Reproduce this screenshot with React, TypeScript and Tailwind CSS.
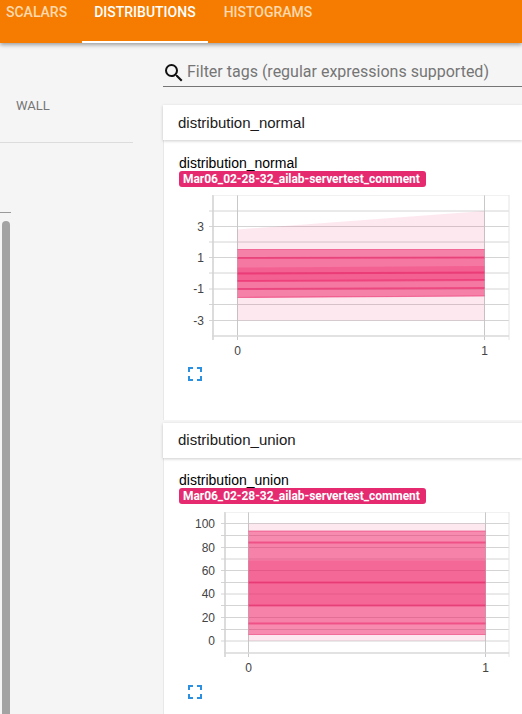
const tabs = [
  { label: "SCALARS", active: false },
  { label: "DISTRIBUTIONS", active: true },
  { label: "HISTOGRAMS", active: false },
];

type Band = { top: [number, number]; bottom: [number, number]; o: number };

type ChartProps = {
  height: number;
  originY: number;
  left: number;
  top: number;
  bottom: number;
  x0: number;
  x1: number;
  tickGap: number;
  grid: number[];
  ticks: { y: number; label: string }[];
  bands: Band[];
  lines: [number, number][];
};

function Chart({ height, originY, left, top, bottom, x0, x1, tickGap, grid, ticks, bands, lines }: ChartProps) {
  const ox = 163;
  const X = (x: number) => x - ox;
  const Y = (y: number) => y - originY;
  const right = 509;
  return (
    <svg width={359} height={height} className="block" style={{ fontFamily: '"Liberation Sans", sans-serif' }}>
      {grid.map((y) => (
        <line key={y} x1={X(left - 4)} x2={X(right)} y1={Y(y)} y2={Y(y)} stroke="#d4d4d4" strokeWidth={1} />
      ))}
      {[x0, x1].map((x) => (
        <line key={x} x1={X(x)} x2={X(x)} y1={Y(top)} y2={Y(bottom + 4)} stroke="#c8c8c8" strokeWidth={1} />
      ))}
      <line x1={X(left)} x2={X(left)} y1={Y(top)} y2={Y(bottom + 4)} stroke="#d0d0d0" strokeWidth={1.5} />
      <line x1={X(right)} x2={X(right)} y1={Y(top)} y2={Y(bottom + 4)} stroke="#e4e4e4" strokeWidth={1} />
      <line x1={X(left)} x2={X(right)} y1={Y(top)} y2={Y(top)} stroke="#e4e4e4" strokeWidth={1} />
      <line x1={X(left - 1)} x2={X(right)} y1={Y(bottom)} y2={Y(bottom)} stroke="#d8d8d8" strokeWidth={1.5} />
      {bands.map((b, i) => (
        <polygon
          key={i}
          points={`${X(x0)},${Y(b.top[0])} ${X(x1)},${Y(b.top[1])} ${X(x1)},${Y(b.bottom[1])} ${X(x0)},${Y(b.bottom[0])}`}
          fill="#f01a62"
          fillOpacity={b.o}
        />
      ))}
      {lines.map(([a, b], i) => (
        <line
          key={i}
          x1={X(x0)}
          x2={X(x1)}
          y1={Y(a)}
          y2={Y(b)}
          stroke="#e91e63"
          strokeOpacity={0.5}
          strokeWidth={i === 0 || i === lines.length - 1 ? 1.2 : 2}
        />
      ))}
      {ticks.map((t) => (
        <text key={t.label} x={X(left - tickGap)} y={Y(t.y) + 4} textAnchor="end" fontSize={12} fill="#444">
          {t.label}
        </text>
      ))}
      <text x={X(x0)} y={Y(bottom + 19)} textAnchor="middle" fontSize={12} fill="#444">0</text>
      <text x={X(x1)} y={Y(bottom + 19)} textAnchor="middle" fontSize={12} fill="#444">1</text>
    </svg>
  );
}

function FullscreenIcon() {
  return (
    <svg width={14} height={14} viewBox="0 0 14 14" fill="none" stroke="#2b90e0" strokeWidth={2}>
      <path d="M1 5V1h4M9 1h4v4M13 9v4H9M5 13H1V9" />
    </svg>
  );
}

function Section({
  title,
  chart,
  headerClass,
  bodyClass,
}: {
  title: string;
  chart: React.ReactNode;
  headerClass: string;
  bodyClass: string;
}) {
  return (
    <section className="w-[359px] shrink-0">
      <div className={`relative z-10 flex h-[35px] items-center bg-white pl-[15px] text-[15px] text-[#1a1a1a] shadow-[0_1px_3px_rgba(0,0,0,0.2)] ${headerClass}`}>
        {title}
      </div>
      <div className={`border-l border-[#e8e8e8] bg-white pl-[15px] ${bodyClass}`}>
        <div className="text-[14px] leading-[15px] text-black">{title}</div>
        <div
          className="flex h-[16px] w-[247px] items-center rounded-[3px] bg-[#e62a70] pl-[4px] text-[12px] font-bold tracking-[-0.05px] text-white"
          style={{ fontFamily: "Roboto, sans-serif" }}
        >
          Mar06_02-28-32_ailab-servertest_comment
        </div>
        <div className="-ml-[16px] mt-[8px]">{chart}</div>
        <div className="ml-[9px]">
          <FullscreenIcon />
        </div>
      </div>
    </section>
  );
}

export default function App() {
  return (
    <div className="flex h-[714px] w-[522px] flex-col overflow-hidden bg-[#f5f5f5]" style={{ fontFamily: '"Liberation Sans", sans-serif' }}>
      <header
        className="relative z-20 flex h-[43px] shrink-0 bg-[#f57c00] pl-[6px] shadow-[0_2px_4px_rgba(0,0,0,0.35)]"
        style={{ fontFamily: "Roboto, sans-serif" }}
      >
        {tabs.map((t) => (
          <div
            key={t.label}
            className={`h-[43px] pt-[3px] text-[14px] font-medium leading-[18px] ${
              t.active
                ? "ml-[15px] mr-[14px] border-b-2 border-white px-[12px] text-white"
                : "text-[#ffd9ad] last:ml-[2px]"
            }`}
          >
            {t.label}
          </div>
        ))}
      </header>
      <div className="flex min-h-0 flex-1">
        <aside className="w-[163px] shrink-0" style={{ fontFamily: "Roboto, sans-serif" }}>
          <div className="mt-[55px] w-[133px] border-b border-[#dcdcdc] pb-[29px] pl-[16px] text-[13px] leading-[15px] text-[#757575]">
            WALL
          </div>
          <div className="mt-[69px] h-px w-[11px] bg-[#9a9a9a]" />
          <div className="ml-[2px] mt-[8px] h-[500px] w-[8px] rounded-t-[4px] bg-[#a3a3a3]" />
        </aside>
        <main className="flex min-w-0 flex-1 flex-col">
          <div className="mt-[19px] flex h-[25px] w-[359px] shrink-0 items-start border-b border-[#757575]" style={{ fontFamily: "Roboto, sans-serif" }}>
            <svg width={24} height={24} viewBox="0 0 24 24" fill="#111" className="-mt-px shrink-0 -ml-px">
              <path d="M15.5 14h-.79l-.28-.27A6.47 6.47 0 0 0 16 9.5 6.5 6.5 0 1 0 9.5 16c1.61 0 3.09-.59 4.23-1.57l.27.28v.79l5 4.99L20.49 19l-4.99-5zm-6 0C7.01 14 5 11.99 5 9.5S7.01 5 9.5 5 14 7.01 14 9.5 11.99 14 9.5 14z" />
            </svg>
            <span className="ml-px whitespace-nowrap text-[16px] leading-[20px] text-[#757575]">Filter tags (regular expressions supported)</span>
          </div>
          <div className="mt-[18px] flex flex-col gap-[3px]">
            <Section
              title="distribution_normal"
              headerClass="pt-[2px]"
              bodyClass="h-[280px] pt-[16px]"
              chart={
                <Chart
                  height={172}
                  originY={195}
                  left={213}
                  top={195}
                  bottom={336}
                  x0={237.5}
                  x1={484.5}
                  tickGap={9}
                  grid={[211, 226.5, 242, 257.5, 273, 289, 304.5, 320.5]}
                  ticks={[
                    { y: 226.5, label: "3" },
                    { y: 257.5, label: "1" },
                    { y: 289, label: "-1" },
                    { y: 320.5, label: "-3" },
                  ]}
                  bands={[
                    { top: [229.5, 211], bottom: [320.5, 320.5], o: 0.1 },
                    { top: [249.5, 249.5], bottom: [297.5, 296], o: 0.5 },
                    { top: [258, 257.5], bottom: [289, 288], o: 0.08 },
                    { top: [267.5, 266], bottom: [281, 280], o: 0.25 },
                  ]}
                  lines={[
                    [249.5, 249.5],
                    [258, 257.5],
                    [273.5, 272.5],
                    [281, 280],
                    [289, 288],
                    [297.5, 296],
                  ]}
                />
              }
            />
            <Section
              title="distribution_union"
              headerClass=""
              bodyClass="h-[300px] pt-[15px]"
              chart={
                <Chart
                  height={173}
                  originY={512}
                  left={225}
                  top={512}
                  bottom={653}
                  x0={248.5}
                  x1={485.5}
                  tickGap={10}
                  grid={[523.5, 535.5, 547.5, 559, 570.5, 582.5, 594, 605.5, 617.5, 629.5, 641]}
                  ticks={[
                    { y: 523.5, label: "100" },
                    { y: 547.5, label: "80" },
                    { y: 570.5, label: "60" },
                    { y: 594, label: "40" },
                    { y: 617.5, label: "20" },
                    { y: 641, label: "0" },
                  ]}
                  bands={[
                    { top: [523.5, 523.5], bottom: [641, 641], o: 0.1 },
                    { top: [531, 531], bottom: [634.5, 634.5], o: 0.45 },
                    { top: [542.5, 542.5], bottom: [623.5, 623.5], o: 0.08 },
                    { top: [560.5, 560.5], bottom: [605.5, 605.5], o: 0.25 },
                  ]}
                  lines={[
                    [531, 531],
                    [542.5, 542.5],
                    [582.5, 582.5],
                    [605.5, 605.5],
                    [623.5, 623.5],
                    [634.5, 634.5],
                  ]}
                />
              }
            />
          </div>
        </main>
      </div>
    </div>
  );
}
